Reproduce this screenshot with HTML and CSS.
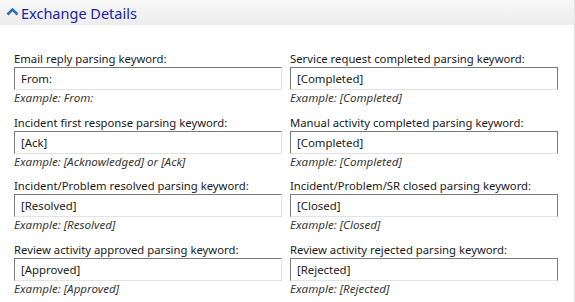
FILE: index.html
```html
<!DOCTYPE html>
<html>
<head>
<meta charset="utf-8">
<link rel="stylesheet" href="styles.css">
</head>
<body>
<div class="page">
  <div class="header">
    <svg class="caret" width="13" height="9" viewBox="0 0 13 9"><path d="M1.5 7.5 L6.5 2.5 L11.5 7.5" fill="none" stroke="#2a6fb8" stroke-width="2.6"/></svg>
    <span class="title">Exchange Details</span>
  </div>
  <div class="grid">
    <div class="field">
      <div class="label">Email reply parsing keyword:</div>
      <div class="box left">From:</div>
      <div class="example">Example: From:</div>
    </div>
    <div class="field">
      <div class="label">Service request completed parsing keyword:</div>
      <div class="box right">[Completed]</div>
      <div class="example">Example: [Completed]</div>
    </div>
    <div class="field">
      <div class="label">Incident first response parsing keyword:</div>
      <div class="box left">[Ack]</div>
      <div class="example">Example: [Acknowledged] or [Ack]</div>
    </div>
    <div class="field">
      <div class="label">Manual activity completed parsing keyword:</div>
      <div class="box right">[Completed]</div>
      <div class="example">Example: [Completed]</div>
    </div>
    <div class="field">
      <div class="label">Incident/Problem resolved parsing keyword:</div>
      <div class="box left">[Resolved]</div>
      <div class="example">Example: [Resolved]</div>
    </div>
    <div class="field">
      <div class="label">Incident/Problem/SR closed parsing keyword:</div>
      <div class="box right">[Closed]</div>
      <div class="example">Example: [Closed]</div>
    </div>
    <div class="field">
      <div class="label">Review activity approved parsing keyword:</div>
      <div class="box left">[Approved]</div>
      <div class="example">Example: [Approved]</div>
    </div>
    <div class="field">
      <div class="label">Review activity rejected parsing keyword:</div>
      <div class="box right">[Rejected]</div>
      <div class="example">Example: [Rejected]</div>
    </div>
  </div>
</div>
</body>
</html>
```
FILE: styles.css
```css
html, body {
  margin: 0;
  padding: 0;
  background: #ffffff;
}
.page {
  width: 574px;
  height: 302px;
  border-right: 1px solid #e2e2e2;
  font-family: "Noto Sans", "Open Sans", sans-serif;
  overflow: hidden;
}
.header {
  height: 25px;
  display: flex;
  align-items: center;
  background: linear-gradient(#f8f8f8, #ececec);
  padding-left: 6px;
  box-sizing: border-box;
}
.caret {
  margin-right: 2px;
  margin-top: -3px;
}
.title {
  font-size: 14.5px;
  color: #2121a6;
}
.grid {
  display: grid;
  grid-template-columns: 268px 268px;
  column-gap: 8px;
  padding: 26px 0 0 14px;
  grid-auto-rows: 63.5px;
}
.label {
  font-size: 11.3px;
  color: #1a1a1a;
  line-height: 15px;
}
.box {
  margin-top: 1px;
  height: 23px;
  box-sizing: border-box;
  border: 1px solid #7a7a7a;
  border-bottom-color: #e3e3e3;
  font-size: 11.4px;
  color: #1a1a1a;
  padding-left: 6px;
  line-height: 21px;
}
.box.left {
  border-right-color: #e3e3e3;
}
.example {
  font-size: 11.6px;
  font-style: italic;
  color: #383838;
  line-height: 14px;
  margin-top: 1px;
}
```
